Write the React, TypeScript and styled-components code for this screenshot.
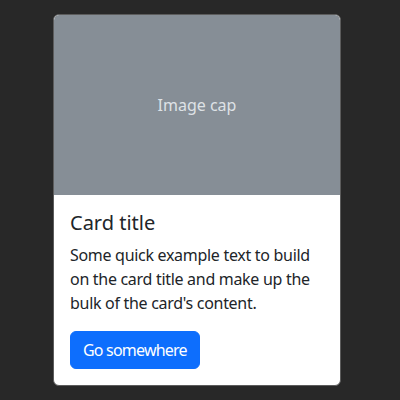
import React from "react";
import styled, { createGlobalStyle } from "styled-components";

const Global = createGlobalStyle`
  html, body { margin: 0; padding: 0; background: #282828; }
  body { font-family: "Noto Sans", "Segoe UI", sans-serif; color: #212529; }
`;

const Page = styled.div`
  display: flex;
  align-items: flex-start;
  padding: 14px 0 0 53px;
  height: 400px;
  box-sizing: border-box;
`;

const Card = styled.div`
  width: 288px;
  box-sizing: border-box;
  background: #fff;
  border: 1px solid #5c5c5c;
  border-radius: 6px;
  display: flex;
  flex-direction: column;
  overflow: hidden;
`;

const ImageCap = styled.div`
  height: 180px;
  background: #868e96;
  color: #dee2e6;
  display: flex;
  align-items: center;
  justify-content: center;
  font-size: 16px;
  border-radius: 5px 5px 0 0;
`;

const Body = styled.div`
  padding: 16px;
`;

const Title = styled.h5`
  margin: 0 0 8px;
  font-size: 20px;
  font-weight: 400;
  line-height: 24px;
`;

const Text = styled.p`
  margin: 0 0 16px;
  font-size: 16px;
  line-height: 24px;
  letter-spacing: -0.3px;
`;

const Button = styled.a`
  display: inline-block;
  background: #0d6efd;
  border: 1px solid #0d6efd;
  color: #fff;
  font-size: 16px;
  line-height: 24px;
  padding: 6px 12px;
  border-radius: 6px;
  text-decoration: none;
  letter-spacing: -0.8px;
`;

export default function App() {
  return (
    <>
      <Global />
      <Page>
        <Card>
          <ImageCap>Image cap</ImageCap>
          <Body>
            <Title>Card title</Title>
            <Text>Some quick example text to build on the card title and make up the bulk of the card's content.</Text>
            <Button href="#">Go somewhere</Button>
          </Body>
        </Card>
      </Page>
    </>
  );
}
